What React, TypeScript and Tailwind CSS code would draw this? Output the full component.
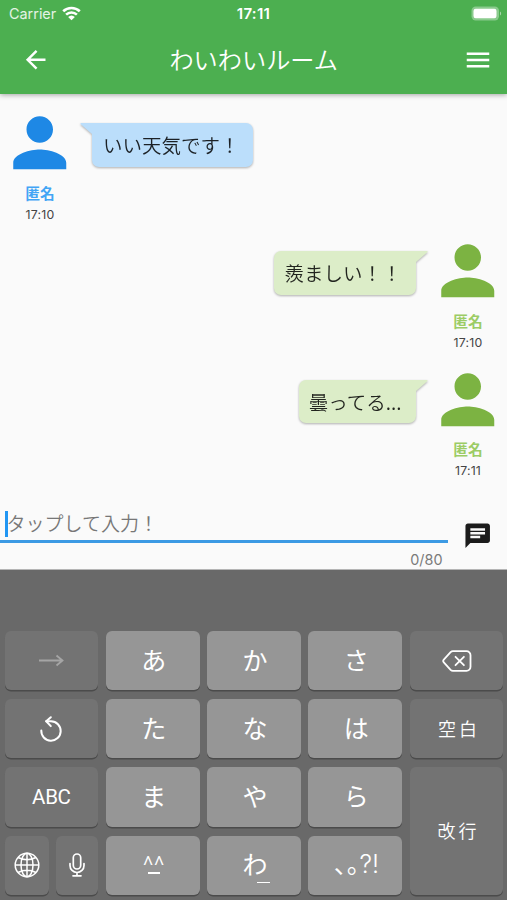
import type { ReactNode } from "react";
import { MdArrowBack, MdChat, MdMenu, MdPerson } from "react-icons/md";

type Message = {
  id: number;
  name: string;
  text: string;
  time: string;
  mine: boolean;
};

const messages: Message[] = [
  { id: 1, name: "匿名", text: "いい天気です！", time: "17:10", mine: false },
  { id: 2, name: "匿名", text: "羨ましい！！", time: "17:10", mine: true },
  { id: 3, name: "匿名", text: "曇ってる...", time: "17:11", mine: true },
];

const StatusBar = () => {
  return (
    <div className="grid h-[28px] grid-cols-3 items-center font-['Inter','Liberation_Sans',sans-serif]">
      <div className="flex items-center gap-[6px] pl-[9px]">
        <span className="text-[14.4px] font-normal leading-none text-white/85">
          Carrier
        </span>
        <svg className="-mt-[2px]" width="19" height="15" viewBox="0 0 19 15" fill="none">
          <path
            d="M1.2 5.3a12 12 0 0 1 16.6 0M4.1 8.6a7.8 7.8 0 0 1 10.8 0"
            stroke="white"
            strokeWidth="2.6"
          />
          <path d="M9.5 14.3 6.1 11a5 5 0 0 1 6.8 0z" fill="white" />
        </svg>
      </div>
      <span className="-mt-[1px] text-center text-[15px] font-semibold leading-none tracking-[0.3px]">
        17:11
      </span>
      <div className="flex justify-end pr-[5px]">
        <svg className="-mt-[1px]" width="31" height="15" viewBox="0 0 31 15">
          <rect x="0.5" y="0.5" width="27.5" height="14" rx="4.2" fill="white" fillOpacity="0.35" />
          <rect x="2.5" y="2.7" width="23" height="9.6" rx="2.2" fill="white" />
          <path d="M29 5.5c1.5.6 1.5 3.4 0 4z" fill="white" fillOpacity="0.5" />
        </svg>
      </div>
    </div>
  );
};

const Header = () => {
  return (
    <header className="relative z-10 h-[94px] bg-[#4caf50] text-white shadow-[0_1px_5px_rgba(0,0,0,0.35)]">
      <StatusBar />
      <div className="flex h-[64px] items-center justify-between pl-[21px] pr-[14px]">
        <MdArrowBack className="size-[29.4px]" />
        <h1 className="pb-[1px] pr-[6px] text-[24.2px] font-[350] leading-none">
          わいわいルーム
        </h1>
        <MdMenu className="size-[30px]" />
      </div>
    </header>
  );
};

const Avatar = ({ message }: { message: Message }) => {
  return (
    <div className="flex w-[80px] flex-col items-center">
      <MdPerson
        className={
          message.mine
            ? "size-[79.5px] text-[#7cb342]"
            : "size-[79.5px] text-[#1e88e5]"
        }
      />
      <span
        className={
          message.mine
            ? "text-[14.7px] font-bold leading-[20px] text-[#9ccc65]"
            : "text-[14.7px] font-bold leading-[20px] text-[#42a5f5]"
        }
      >
        {message.name}
      </span>
      <span className="mt-[4px] font-['Inter','Liberation_Sans',sans-serif] text-[12.3px] font-normal leading-[16px] tracking-[0.2px] text-[#444]">
        {message.time}
      </span>
    </div>
  );
};

const Bubble = ({ message }: { message: Message }) => {
  const shape = message.mine
    ? "rounded-l-[7px] rounded-br-[7px] bg-[#dcedc8] pl-[10px] pr-[14.5px]"
    : "rounded-r-[7px] rounded-bl-[7px] bg-[#bbdefb] pl-[11px] pr-[13.5px]";

  return (
    <div
      className={`relative mt-[20px] flex h-[43.5px] items-center text-[19.5px] leading-none text-black/85 drop-shadow-[0_1px_1px_rgba(0,0,0,0.3)] ${shape}`}
    >
      {message.mine ? (
        <svg className="absolute -right-[12px] top-0" width="13" height="13">
          <path d="M0 0H12Q13 .5 12.3 1.2L1 11V13H0z" fill="#dcedc8" />
        </svg>
      ) : (
        <svg className="absolute -left-[12px] top-0" width="13" height="13">
          <path d="M13 0H1Q0 .5 .7 1.2L12 11V13H13z" fill="#bbdefb" />
        </svg>
      )}
      <span className="whitespace-nowrap">{message.text}</span>
    </div>
  );
};

const MessageRow = ({ message }: { message: Message }) => {
  return (
    <div
      className={
        message.mine
          ? "-mr-[1px] flex h-[128.3px] flex-row-reverse items-start gap-[12px]"
          : "flex h-[128.3px] items-start gap-[12px]"
      }
    >
      <Avatar message={message} />
      <Bubble message={message} />
    </div>
  );
};

const MessageInput = () => {
  return (
    <div className="flex h-[81px]">
      <div className="w-[448px]">
        <div className="flex h-[55px] items-center border-b-[3px] border-[#3c9ae4] pl-[5px] pt-[20px]">
          <span className="h-[26px] w-[2.5px] bg-[#2196f3]" />
          <span className="-ml-[1px] mb-[4px] text-[19px] leading-none text-[#777]">
            タップして入力！
          </span>
        </div>
        <p className="pr-[5.5px] pt-[8px] text-right font-['Inter','Liberation_Sans',sans-serif] text-[14.4px] font-normal leading-[18px] text-[#7a7a7a]">
          0/80
        </p>
      </div>
      <MdChat className="ml-[14.7px] mt-[33px] size-[29.4px] text-[#1b1b1b]" />
    </div>
  );
};

const Key = ({
  children,
  light = false,
  className = "",
}: {
  children: ReactNode;
  light?: boolean;
  className?: string;
}) => {
  return (
    <button
      className={`flex min-w-0 items-center justify-center rounded-[6px] leading-none shadow-[0_1.5px_0_#4b4b4b] ${
        light ? "bg-[#969696] pb-[3px] pl-[2px] text-[25px]" : "bg-[#737373] text-[18px]"
      } ${className}`}
    >
      {children}
    </button>
  );
};

const Keyboard = () => {
  return (
    <div className="h-[331px] border-t border-[#b5b5b5] bg-[#696969] pl-[4.5px] pr-[3.5px] pt-[61px] font-normal text-white">
      <div className="grid grid-cols-5 grid-rows-[repeat(4,59.3px)] gap-x-[7.6px] gap-y-[8.9px]">
        <Key>
          <svg width="25" height="13" viewBox="0 0 25 13" fill="none" stroke="#a5a5a5" strokeWidth="1.8">
            <path d="M0 6.5h23.5M17.5 1.5l6 5-6 5" />
          </svg>
        </Key>
        <Key light>あ</Key>
        <Key light>か</Key>
        <Key light>さ</Key>
        <Key>
          <svg width="30" height="22" viewBox="0 0 30 22" fill="none" stroke="white" strokeWidth="1.8" strokeLinecap="round" strokeLinejoin="round">
            <path d="M11 1.2h13.5a4 4 0 0 1 4 4v11.6a4 4 0 0 1-4 4H11q-1.4 0-2.4-1L1.8 12.3q-1.2-1.3 0-2.6l6.8-7.5q1-1 2.4-1z" />
            <path d="m13.5 6.8 8.4 8.4m0-8.4-8.4 8.4" />
          </svg>
        </Key>

        <Key>
          <svg width="22" height="26" viewBox="0 0 22 26" fill="none" stroke="white" strokeWidth="2" strokeLinecap="round" strokeLinejoin="round">
            <path d="M1.3 14.4A9.7 9.7 0 1 0 11 5.3H6.2" />
            <path d="M10.8 1.2 6.2 5.3l4.6 4.8" />
          </svg>
        </Key>
        <Key light>た</Key>
        <Key light>な</Key>
        <Key light>は</Key>
        <Key className="pb-[2px] pl-[5px]">
          <span className="font-[350] tracking-[3.2px]">空白</span>
        </Key>

        <Key>
          <span className="font-['Roboto','Liberation_Sans',sans-serif] text-[20.5px] tracking-[-0.3px]">
            ABC
          </span>
        </Key>
        <Key light>ま</Key>
        <Key light>や</Key>
        <Key light>ら</Key>
        <Key className="row-span-2 pb-[2px] pl-[4px]">
          <span className="font-[350] tracking-[3.2px]">改行</span>
        </Key>

        <div className="grid grid-cols-[44px_1fr] gap-[7.5px]">
          <Key>
            <svg width="26" height="26" viewBox="0 0 26 26" fill="none" stroke="white" strokeWidth="1.5">
              <circle cx="13" cy="13" r="11.8" />
              <ellipse cx="13" cy="13" rx="6" ry="11.8" />
              <path d="M13 1v24M1 13h24M4 5.5q9 4.5 18 0M4 20.5q9-4.5 18 0" />
            </svg>
          </Key>
          <Key>
            <svg width="16" height="24" viewBox="0 0 16 24" fill="none" stroke="white" strokeWidth="1.7" strokeLinecap="round">
              <rect x="4.3" y="1" width="7.4" height="15" rx="3.7" />
              <path d="M1 10.5v2a7 7 0 0 0 14 0v-2M8 19.5v3.2M4 22.8h8" />
            </svg>
          </Key>
        </div>
        <Key light>
          <span className="flex flex-col items-center">
            <span className="h-[19px] font-['Roboto','Liberation_Sans',sans-serif] text-[26px] font-light leading-[25px]">
              ^^
            </span>
            <span className="h-[2px] w-[12px] bg-white" />
          </span>
        </Key>
        <Key light>
          <span className="relative">
            わ
            <span className="absolute -bottom-[7px] left-[15px] h-[1.5px] w-[13px] bg-white" />
          </span>
        </Key>
        <Key light>
          <span className="flex items-baseline pl-[1px]">
            <span>､｡</span>
            <span className="font-['Inter','Liberation_Sans',sans-serif] text-[25px] font-light">
              ?!
            </span>
          </span>
        </Key>
      </div>
    </div>
  );
};

const App = () => {
  return (
    <div className="flex h-[900px] w-[507px] flex-col overflow-hidden bg-[#fafafa] font-['Noto_Sans_CJK_JP',sans-serif] font-[350]">
      <Header />
      <main className="flex-1 pt-[9px]">
        {messages.map((message) => (
          <MessageRow key={message.id} message={message} />
        ))}
      </main>
      <MessageInput />
      <Keyboard />
    </div>
  );
};

export default App;
